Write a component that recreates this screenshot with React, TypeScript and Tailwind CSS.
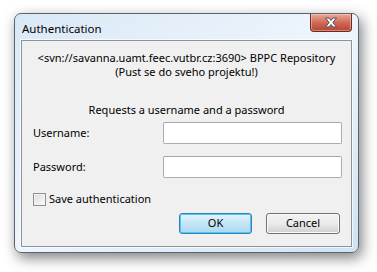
import React from "react";

const font = { fontFamily: '"Noto Sans", "Liberation Sans", sans-serif' };

function CloseButton() {
  return (
    <div className="absolute right-[6px] top-0 h-[18px] w-[42px] rounded-b-[4px] border border-t-0 border-[#6b2b22] bg-gradient-to-b from-[#e9a999] via-[#cf6b58] to-[#b8422f] flex items-center justify-center shadow-[inset_0_0_0_1px_rgba(255,220,210,0.45)]">
      <svg width="14" height="11" viewBox="0 0 14 11">
        <path
          d="M1.5 1 L5 1 L7 3.5 L9 1 L12.5 1 L8.8 5.5 L12.5 10 L9 10 L7 7.5 L5 10 L1.5 10 L5.2 5.5 Z"
          fill="#ffffff"
          stroke="#4a4f58"
          strokeWidth="1"
          strokeLinejoin="round"
        />
      </svg>
    </div>
  );
}

function Field({ label }: { label: string }) {
  return (
    <div className="flex items-center h-[22px]">
      <span className="w-[130px] text-[11px] text-black">{label}</span>
      <div className="w-[179px] h-[22px] bg-white border border-[#abadb3] border-t-[#a3a6ad] rounded-[2px]" />
    </div>
  );
}

export default function App() {
  return (
    <div className="w-[377px] h-[272px] bg-white pt-[13px] pl-[14px]" style={font}>
      <div className="relative w-[345px] h-[240px] rounded-[7px] border border-[#5a6470] bg-gradient-to-br from-[#d9e8f6] via-[#eef5fc] to-[#cfe3f3] shadow-[3px_5px_14px_rgba(0,0,0,0.5)] px-[6px] pb-[5px] flex flex-col">
        <CloseButton />
        <div className="h-[26px] flex items-center pl-[1px] pt-[3px] text-[11.5px] text-black">
          Authentication
        </div>
        <div className="flex-1 border border-[#8d939c] shadow-[0_0_0_1px_rgba(255,255,255,0.7)] bg-[#f0f0f0] flex flex-col">
          <div className="pt-[10px] text-center text-[11px] leading-[14px] text-black">
            <div>&lt;svn://savanna.uamt.feec.vutbr.cz:3690&gt; BPPC Repository</div>
            <div>(Pust se do sveho projektu!)</div>
          </div>
          <div className="mt-[24px] text-center text-[11px] leading-[14px] text-black">
            Requests a username and a password
          </div>
          <div className="mt-[5px] pl-[11px] flex flex-col gap-[12px]">
            <Field label="Username:" />
            <Field label="Password:" />
          </div>
          <div className="mt-[15px] pl-[11px] flex items-center gap-[3px] h-[13px] text-[11px] text-black">
            <div className="w-[13px] h-[13px] border border-[#8f8f8f] bg-gradient-to-br from-[#dcdcdc] to-[#fbfbfb] shadow-[inset_0_0_0_1px_#f4f4f4]" />
            <span>Save authentication</span>
          </div>
          <div className="mt-[7px] flex justify-end gap-[14px] pr-[11px]">
            <div className="w-[73px] h-[21px] rounded-[3px] border border-[#3c7fb1] bg-gradient-to-b from-[#e5f4fc] via-[#c4e5f6] to-[#a9d9f2] shadow-[inset_0_0_0_1px_#48c8f8] flex items-center justify-center text-[11px] text-black">
              OK
            </div>
            <div className="w-[74px] h-[21px] rounded-[3px] border border-[#707070] bg-gradient-to-b from-[#f2f2f2] via-[#ebebeb] to-[#cfcfcf] shadow-[inset_0_0_0_1px_#fcfcfc] flex items-center justify-center text-[11px] text-black">
              Cancel
            </div>
          </div>
        </div>
      </div>
    </div>
  );
}
